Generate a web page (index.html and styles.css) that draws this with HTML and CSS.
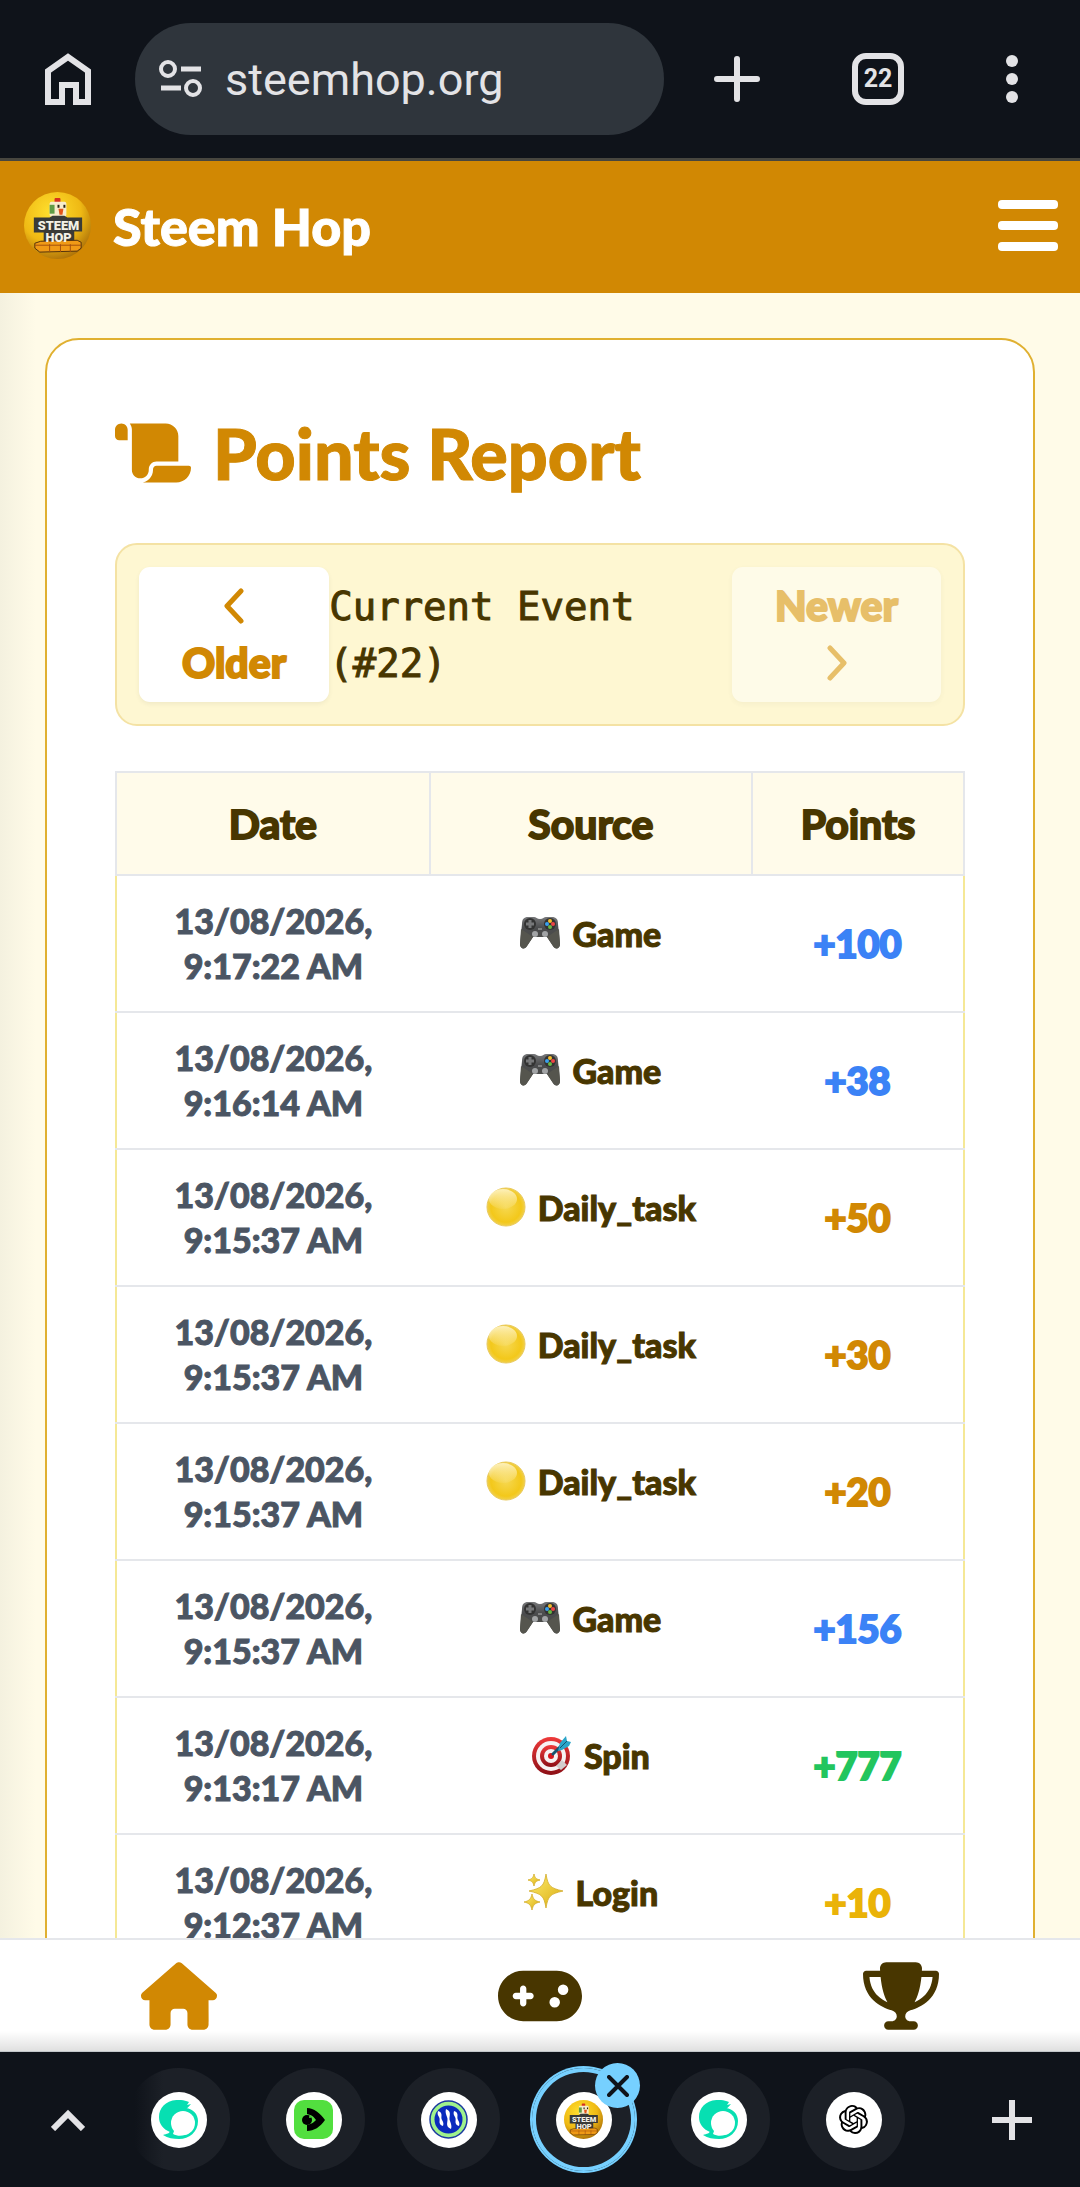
FILE: index.html
```
<!DOCTYPE html>
<html lang="en">
<head>
    <meta charset="UTF-8">
    <meta name="viewport" content="width=device-width, initial-scale=1.0">
    <title>Steem Hop - Points Report</title>
    <link rel="stylesheet" href="styles.css">
</head>
<body>

    <!-- Shared icons -->
    <svg class="sprite" aria-hidden="true">
        <defs>
            <radialGradient id="logoBg" cx="0.4" cy="0.3" r="0.75">
                <stop offset="0" stop-color="#ffe02e"/>
                <stop offset="0.6" stop-color="#efb914"/>
                <stop offset="1" stop-color="#a86c08"/>
            </radialGradient>
            <radialGradient id="ballFill" cx="0.5" cy="0.5" r="0.5">
                <stop offset="0" stop-color="#f6d851"/>
                <stop offset="0.8" stop-color="#f3c81a"/>
                <stop offset="1" stop-color="#f1d04c"/>
            </radialGradient>
            <linearGradient id="ballShine" x1="0" y1="0" x2="0" y2="1">
                <stop offset="0" stop-color="#fdf0b8"/>
                <stop offset="1" stop-color="#fdf0b8" stop-opacity="0.1"/>
            </linearGradient>
            <linearGradient id="padFill" x1="0" y1="0" x2="0" y2="1">
                <stop offset="0" stop-color="#77787a"/>
                <stop offset="0.35" stop-color="#4b4c4e"/>
                <stop offset="1" stop-color="#4a4a45"/>
            </linearGradient>
            <linearGradient id="redFill" x1="0" y1="0" x2="0" y2="1">
                <stop offset="0" stop-color="#ef3a3a"/>
                <stop offset="1" stop-color="#8c0f16"/>
            </linearGradient>
            <linearGradient id="starFill" x1="0" y1="0" x2="1" y2="1">
                <stop offset="0" stop-color="#ffee6e"/>
                <stop offset="1" stop-color="#d9ab10"/>
            </linearGradient>
        </defs>

        <symbol id="logo" viewBox="0 0 68 68">
            <circle cx="34" cy="34" r="34" fill="url(#logoBg)"/>
            <rect x="31" y="6" width="6" height="5" rx="1" fill="#d6301e"/>
            <rect x="26" y="10" width="17" height="15" rx="2" fill="#f7eccb"/>
            <rect x="26" y="13" width="5" height="9" fill="#5f9c45"/>
            <rect x="34" y="13" width="2" height="3" fill="#2a2416"/>
            <rect x="40" y="13" width="2" height="3" fill="#2a2416"/>
            <path d="M35 17h5l-1 6h-3z" fill="#e2551a"/>
            <path d="M10 26h16l3-2h12l3 2h15v14H51v12H20V41H10z" fill="#3a3b37"/>
            <path d="M11 52l6-2 37-1 4 2v6l-4 3-38 1-5-4z" fill="#f09a16" stroke="#53320c"/>
            <path d="M11 54h47M26 53v8M37 53v8M47 53v8" fill="none" stroke="#a4500d"/>
        </symbol>

        <symbol id="gamepad-emoji" viewBox="0 0 40 40">
            <path d="M8 4h6c2 0 3 2 6 2s4-2 6-2h6c4 0 6 2 6 7l2 20c0 5-5 6-7 2l-6-9H13l-6 9c-2 4-7 3-7-2L2 11c0-5 2-7 6-7z" fill="url(#padFill)"/>
            <path d="M1 16l12 8-6 9c-2 4-7 3-7-2zM39 16l-12 8 6 9c2 4 7 3 7-2z" fill="#55554e"/>
            <circle cx="10" cy="11" r="6" fill="#333"/>
            <path d="M10 7v8M6 11h8" stroke="#77787a" stroke-width="3"/>
            <circle cx="30" cy="11" r="6" fill="#333"/>
            <circle cx="30" cy="8" r="2" fill="#f4bd2c"/>
            <circle cx="27" cy="11" r="2" fill="#3aa0ee"/>
            <circle cx="33" cy="11" r="2" fill="#ee4444"/>
            <circle cx="30" cy="14" r="2" fill="#68b844"/>
            <circle cx="15" cy="21" r="3" fill="#a2a4a6"/>
            <circle cx="25" cy="21" r="3" fill="#a2a4a6"/>
            <path d="M18 16h4" stroke="#b5b5b5"/>
        </symbol>

        <symbol id="ball-emoji" viewBox="0 0 40 40">
            <circle cx="20" cy="20" r="19" fill="url(#ballFill)" stroke="#e9c95a"/>
            <ellipse cx="17" cy="12" rx="14" ry="10" fill="url(#ballShine)"/>
        </symbol>

        <symbol id="target-emoji" viewBox="0 0 40 40">
            <circle cx="19" cy="21" r="19" fill="url(#redFill)"/>
            <circle cx="19" cy="21" r="15" fill="#f7f2f2"/>
            <circle cx="19" cy="21" r="11" fill="url(#redFill)"/>
            <circle cx="19" cy="21" r="7" fill="#f7f2f2"/>
            <circle cx="19" cy="21" r="3" fill="#d5161c"/>
            <path d="M24 31l6-6 5 5-6 5z" fill="#d3cccc"/>
            <path d="M21 19L31 9" stroke="#14546f" stroke-width="3" stroke-linecap="round"/>
            <path d="M28 8l6-7 1 5 4 1-2 4-7 4-4 1z" fill="#2ba5c9"/>
            <path d="M28 13L35 6" stroke="#14546f" stroke-width="1"/>
        </symbol>

        <symbol id="sparkles-emoji" viewBox="0 0 40 40">
            <g fill="url(#starFill)" stroke="#d3ac2a" stroke-width="0.8">
                <path d="M22 2c2 12 4 14 17 17-13 3-15 5-17 17-2-12-4-14-17-17 13-3 15-5 17-17z"/>
                <path d="M10 2c1 4 2 5 6 6-4 1-5 2-6 6-1-4-2-5-6-6 4-1 5-2 6-6z"/>
                <path d="M8 22c1 5 3 7 8 8-5 1-7 3-8 8-1-5-3-7-8-8 5-1 7-3 8-8z"/>
            </g>
        </symbol>

        <symbol id="steemit" viewBox="0 0 39 39">
            <path d="M22 0C8 -1 0 7 0 17c0 7 4 12 11 15l5-9 6-13h3c3-1 5-4 7-6l-4 1 2-3c-3-1-5-2-8-2z" fill="#07dfb2"/>
            <path d="M11 31c0 2-3 3-7 4 5 3 10 4 16 4 10 0 19-7 19-18 0-7-5-12-12-13-9 0-14 8-16 23z" fill="#07dfb2"/>
            <circle cx="24" cy="23" r="12" fill="#fff"/>
            <path d="M14 34c5 3 12 2 16-1l-6-4-9 2z" fill="#fff"/>
        </symbol>
    </svg>

    <div class="browser-bar">
        <button class="bar-btn" aria-label="Home">
            <svg width="46" height="52" viewBox="0 0 46 52" fill="none" stroke="#e3e3e6" stroke-width="6"><path d="M3 49V18L23 4l20 14v31H31V32H17v17z"/></svg>
        </button>
        <div class="address">
            <svg width="43" height="38" viewBox="0 0 43 38" fill="none" stroke="#e3e3e6"><circle cx="9" cy="9" r="7" stroke-width="4"/><circle cx="34" cy="28" r="7" stroke-width="4"/><path d="M22 9h20M2 28h20" stroke-width="5"/></svg>
            <input type="text" class="url" value="steemhop.org" aria-label="Address">
        </div>
        <div class="bar-actions">
            <button class="bar-btn" aria-label="New tab">
                <svg width="46" height="46" viewBox="0 0 46 46" stroke="#e3e3e6" stroke-width="6" stroke-linecap="round"><path d="M23 3v40M3 23h40"/></svg>
            </button>
            <button class="tab-count" aria-label="Open tabs">22</button>
            <button class="bar-btn" aria-label="Menu">
                <svg width="12" height="48" viewBox="0 0 12 48" fill="#e3e3e6"><circle cx="6" cy="6" r="6"/><circle cx="6" cy="24" r="6"/><circle cx="6" cy="42" r="6"/></svg>
            </button>
        </div>
    </div>

    <header class="site-header">
        <a class="brand" href="#">
            <svg width="67" height="67" viewBox="0 0 68 68">
                <use href="#logo"/>
                <text x="35" y="39" class="logo-text">STEEM</text>
                <text x="35" y="51" class="logo-text">HOP</text>
            </svg>
            <span>Steem Hop</span>
        </a>
        <button class="bar-btn" aria-label="Open menu">
            <svg width="60" height="52" viewBox="0 0 60 52" fill="#fff"><rect width="60" height="9" rx="4"/><rect y="21" width="60" height="9" rx="4"/><rect y="42" width="60" height="9" rx="4"/></svg>
        </button>
    </header>

    <main class="page">
        <section class="card">
            <h1 class="title">
                <svg width="76" height="60" viewBox="0 32 576 448" fill="currentColor"><path d="M0 80v48c0 17.7 14.3 32 32 32H48 96V80c0-26.5-21.5-48-48-48S0 53.5 0 80zM112 32c10 13.4 16 30 16 48V384c0 35.3 28.7 64 64 64s64-28.7 64-64v-5.3c0-32.4 26.3-58.7 58.7-58.7H480V128c0-53-43-96-96-96H112zM464 480c61.9 0 112-50.1 112-112c0-8.8-7.2-16-16-16H314.7c-14.7 0-26.7 11.9-26.7 26.7V384c0 53-43 96-96 96H368h96z"/></svg>
                Points Report
            </h1>

            <div class="event-nav">
                <button class="event-btn">
                    <span class="chevron"><svg width="22" height="36" viewBox="0 0 22 36" fill="none" stroke="currentColor" stroke-width="5" stroke-linecap="round" stroke-linejoin="round"><path d="M18 3L4 18l14 15"/></svg></span>
                    Older
                </button>
                <span class="event-name">Current Event (#22)</span>
                <button class="event-btn" disabled>
                    Newer
                    <span class="chevron"><svg width="22" height="36" viewBox="0 0 22 36" fill="none" stroke="currentColor" stroke-width="5" stroke-linecap="round" stroke-linejoin="round"><path d="M4 3l14 15L4 33"/></svg></span>
                </button>
            </div>

            <table class="points-table">
                <thead>
                    <tr>
                        <th class="col-date">Date</th>
                        <th class="col-source">Source</th>
                        <th>Points</th>
                    </tr>
                </thead>
                <tbody>
                    <tr>
                        <td class="date">13/08/2026,<br>9:17:22 AM</td>
                        <td class="source"><span><svg><use href="#gamepad-emoji"/></svg>Game</span></td>
                        <td class="points game">+100</td>
                    </tr>
                    <tr>
                        <td class="date">13/08/2026,<br>9:16:14 AM</td>
                        <td class="source"><span><svg><use href="#gamepad-emoji"/></svg>Game</span></td>
                        <td class="points game">+38</td>
                    </tr>
                    <tr>
                        <td class="date">13/08/2026,<br>9:15:37 AM</td>
                        <td class="source"><span><svg><use href="#ball-emoji"/></svg>Daily_task</span></td>
                        <td class="points task">+50</td>
                    </tr>
                    <tr>
                        <td class="date">13/08/2026,<br>9:15:37 AM</td>
                        <td class="source"><span><svg><use href="#ball-emoji"/></svg>Daily_task</span></td>
                        <td class="points task">+30</td>
                    </tr>
                    <tr>
                        <td class="date">13/08/2026,<br>9:15:37 AM</td>
                        <td class="source"><span><svg><use href="#ball-emoji"/></svg>Daily_task</span></td>
                        <td class="points task">+20</td>
                    </tr>
                    <tr>
                        <td class="date">13/08/2026,<br>9:15:37 AM</td>
                        <td class="source"><span><svg><use href="#gamepad-emoji"/></svg>Game</span></td>
                        <td class="points game">+156</td>
                    </tr>
                    <tr>
                        <td class="date">13/08/2026,<br>9:13:17 AM</td>
                        <td class="source"><span><svg><use href="#target-emoji"/></svg>Spin</span></td>
                        <td class="points spin">+777</td>
                    </tr>
                    <tr>
                        <td class="date">13/08/2026,<br>9:12:37 AM</td>
                        <td class="source"><span><svg><use href="#sparkles-emoji"/></svg>Login</span></td>
                        <td class="points login">+10</td>
                    </tr>
                </tbody>
            </table>
        </section>
    </main>

    <nav class="bottom-nav">
        <a href="#" class="active" aria-label="Home">
            <svg width="76" height="68" viewBox="0 0 576 512" fill="currentColor"><path d="M575.8 255.5c0 18-15 32.1-32 32.1l-32 0 .7 160.2c0 2.7-.2 5.4-.5 8.1l0 16.2c0 22.1-17.9 40-40 40l-16 0c-1.1 0-2.2 0-3.3-.1c-1.4 .1-2.8 .1-4.2 .1L416 512l-24 0c-22.1 0-40-17.9-40-40l0-24 0-64c0-17.7-14.3-32-32-32l-64 0c-17.7 0-32 14.3-32 32l0 64 0 24c0 22.1-17.9 40-40 40l-24 0-31.9 0c-1.5 0-3-.1-4.5-.2c-1.2 .1-2.4 .2-3.6 .2l-16 0c-22.1 0-40-17.9-40-40l0-112c0-.9 0-1.9 .1-2.8l0-69.6-32 0c-18 0-32-14-32-32.1c0-9 3-17 10-24L266.4 8c7-7 15-8 22-8s15 2 21 7L564.8 231.5c8 7 12 15 11 24z"/></svg>
        </a>
        <a href="#" aria-label="Games">
            <svg width="84" height="68" viewBox="0 0 640 512" fill="currentColor"><path d="M192 64C86 64 0 150 0 256S86 448 192 448l256 0c106 0 192-86 192-192s-86-192-192-192L192 64zM496 168a40 40 0 1 1 0 80 40 40 0 1 1 0-80zM392 304a40 40 0 1 1 80 0 40 40 0 1 1 -80 0zM168 200c0-13.3 10.7-24 24-24s24 10.7 24 24l0 32 32 0c13.3 0 24 10.7 24 24s-10.7 24-24 24l-32 0 0 32c0 13.3-10.7 24-24 24s-24-10.7-24-24l0-32-32 0c-13.3 0-24-10.7-24-24s10.7-24 24-24l32 0 0-32z"/></svg>
        </a>
        <a href="#" aria-label="Leaderboard">
            <svg width="76" height="68" viewBox="0 0 576 512" fill="currentColor"><path d="M400 0L176 0c-26.5 0-48.1 21.8-47.1 48.2c.2 5.3 .4 10.6 .7 15.8L24 64C10.7 64 0 74.7 0 88c0 92.6 33.5 157 78.5 200.7c44.3 43.1 98.3 64.8 138.1 75.8c23.4 6.5 39.4 26 39.4 45.6c0 20.9-17 37.9-37.9 37.9L192 448c-17.7 0-32 14.3-32 32s14.3 32 32 32l192 0c17.7 0 32-14.3 32-32s-14.3-32-32-32l-26.1 0C337 448 320 431 320 410.1c0-19.6 15.9-39.2 39.4-45.6c39.9-11 93.9-32.7 138.2-75.8C542.5 245 576 180.6 576 88c0-13.3-10.7-24-24-24L446.4 64c.3-5.2 .5-10.4 .7-15.8C448.1 21.8 426.5 0 400 0zM48.9 112l84.4 0c9.1 90.1 29.2 150.3 51.9 190.6c-24.9-11-50.8-26.5-73.2-48.3c-32-31.1-58-76-63-142.3zM464.1 254.3c-22.4 21.8-48.3 37.3-73.2 48.3c22.7-40.3 42.8-100.5 51.9-190.6l84.4 0c-5.1 66.3-31.1 111.2-63 142.3z"/></svg>
        </a>
    </nav>

    <div class="tab-strip">
        <button class="bar-btn" aria-label="Show all tabs">
            <svg width="34" height="22" viewBox="0 0 34 22" fill="none" stroke="#e3e3e6" stroke-width="6"><path d="M2 20L17 5l15 15"/></svg>
        </button>
        <div class="tabs">
            <button class="tab faded" aria-label="Steemit">
                <span class="favicon"><svg width="39" height="39"><use href="#steemit"/></svg></span>
            </button>
            <button class="tab" aria-label="Video">
                <span class="favicon"><svg width="39" height="39" viewBox="0 0 39 39"><rect width="39" height="39" rx="10" fill="#52df3f"/><path d="M13 8c7 0 13 5 18 12-5 7-11 11-18 11v-6c5-1 7-3 9-5-2-3-4-5-9-6z"/><circle cx="13" cy="20" r="5"/><circle cx="16" cy="17" r="1" fill="#52df3f"/></svg></span>
            </button>
            <button class="tab" aria-label="Steem">
                <span class="favicon"><svg width="39" height="39" viewBox="0 0 39 39"><circle cx="19.5" cy="19.5" r="18.5" fill="#9ff28c" stroke="#1b3aa0" stroke-width="1.5"/><circle cx="19.5" cy="19.5" r="14" fill="#0a2bbd"/><path d="M9 11c6 2 2 6 4 9 1 2 2 3 1 6-6-2-2-6-4-9-1-2-2-3-1-6zM17 9c7 3 2 8 4 12 1 3 2 5 1 8-7-3-2-8-4-12-1-3-2-5-1-8zM25 11c6 2 2 6 4 9 1 2 2 3 1 6-6-2-2-6-4-9-1-2-2-3-1-6z" fill="#fff"/></svg></span>
            </button>
            <button class="tab current" aria-label="Steem Hop">
                <span class="favicon">
                    <svg width="39" height="39" viewBox="0 0 68 68">
                        <use href="#logo"/>
                        <text x="35" y="39" class="logo-text">STEEM</text>
                        <text x="35" y="51" class="logo-text">HOP</text>
                    </svg>
                </span>
                <span class="close"><svg width="22" height="22" viewBox="0 0 22 22" stroke="#0f131a" stroke-width="4" stroke-linecap="round"><path d="M2 2l18 18M20 2L2 20"/></svg></span>
            </button>
            <button class="tab" aria-label="Steemit">
                <span class="favicon"><svg width="39" height="39"><use href="#steemit"/></svg></span>
            </button>
            <button class="tab" aria-label="ChatGPT">
                <span class="favicon"><svg width="29" height="29" viewBox="0 0 24 24"><path d="M22.2819 9.8211a5.9847 5.9847 0 0 0-.5157-4.9108 6.0462 6.0462 0 0 0-6.5098-2.9A6.0651 6.0651 0 0 0 4.9807 4.1818a5.9847 5.9847 0 0 0-3.9977 2.9 6.0462 6.0462 0 0 0 .7427 7.0966 5.98 5.98 0 0 0 .511 4.9107 6.051 6.051 0 0 0 6.5146 2.9001A5.9847 5.9847 0 0 0 13.2599 24a6.0557 6.0557 0 0 0 5.7718-4.2058 5.9894 5.9894 0 0 0 3.9977-2.9001 6.0557 6.0557 0 0 0-.7475-7.0729zm-9.022 12.6081a4.4755 4.4755 0 0 1-2.8764-1.0408l.1419-.0804 4.7783-2.7582a.7948.7948 0 0 0 .3927-.6813v-6.7369l2.02 1.1686a.071.071 0 0 1 .038.052v5.5826a4.504 4.504 0 0 1-4.4945 4.4944zm-9.6607-4.1254a4.4708 4.4708 0 0 1-.5346-3.0137l.142.0852 4.783 2.7582a.7712.7712 0 0 0 .7806 0l5.8428-3.3685v2.3324a.0804.0804 0 0 1-.0332.0615L9.74 19.9502a4.4992 4.4992 0 0 1-6.1408-1.6464zM2.3408 7.8956a4.485 4.485 0 0 1 2.3655-1.9728V11.6a.7664.7664 0 0 0 .3879.6765l5.8144 3.3543-2.0201 1.1685a.0757.0757 0 0 1-.071 0l-4.8303-2.7865A4.504 4.504 0 0 1 2.3408 7.872zm16.5963 3.8558L13.1038 8.364 15.1192 7.2a.0757.0757 0 0 1 .071 0l4.8303 2.7913a4.4944 4.4944 0 0 1-.6765 8.1042v-5.6772a.79.79 0 0 0-.407-.667zm2.0107-3.0231l-.142-.0852-4.7735-2.7818a.7759.7759 0 0 0-.7854 0L9.409 9.2297V6.8974a.0662.0662 0 0 1 .0284-.0615l4.8303-2.7866a4.4992 4.4992 0 0 1 6.6802 4.66zM8.3065 12.863l-2.02-1.1638a.0804.0804 0 0 1-.038-.0567V6.0742a4.4992 4.4992 0 0 1 7.3757-3.4537l-.142.0805L8.704 5.459a.7948.7948 0 0 0-.3927.6813zm1.0976-2.3654l2.602-1.4998 2.6069 1.4998v2.9994l-2.5974 1.4997-2.6067-1.4997Z"/></svg></span>
            </button>
        </div>
        <button class="bar-btn" aria-label="New tab">
            <svg width="40" height="40" viewBox="0 0 40 40" stroke="#e3e3e6" stroke-width="6"><path d="M20 0v40M0 20h40"/></svg>
        </button>
    </div>

</body>
</html>
```
FILE: styles.css
```
* {
    box-sizing: border-box;
}

body {
    margin: 0;
    height: 100vh;
    display: flex;
    flex-direction: column;
    overflow: hidden;
    font-family: Lato, sans-serif;
    font-weight: 900;
    color: #483600;
    background: #fffbe8;
}

svg {
    display: block;
    flex-shrink: 0;
}

button {
    font: inherit;
    color: inherit;
    border: none;
    background: none;
    padding: 0;
    cursor: pointer;
}

.sprite {
    position: absolute;
    width: 0;
    height: 0;
}

.logo-text {
    font-family: Roboto, sans-serif;
    font-size: 13px;
    font-weight: 900;
    text-anchor: middle;
    fill: #f3f1e6;
}

/* Browser toolbar */
.browser-bar {
    display: flex;
    align-items: center;
    gap: 44px;
    padding: 23px 62px 23px 45px;
    background: #0f131a;
    border-bottom: 3px solid #47463f;
}

.address {
    flex: 1;
    display: flex;
    align-items: center;
    gap: 23px;
    min-width: 0;
    height: 112px;
    padding: 0 24px;
    border-radius: 56px;
    background: #2f353c;
}

.url {
    flex: 1;
    min-width: 0;
    border: none;
    padding: 0;
    outline: none;
    background: none;
    font-family: Roboto, sans-serif;
    font-size: 45px;
    font-weight: 400;
    color: #e3e3e6;
}

.bar-actions {
    display: flex;
    align-items: center;
    justify-content: space-between;
    width: 304px;
    margin-left: 6px;
}

.tab-count {
    width: 52px;
    height: 52px;
    margin-right: 10px;
    border: 6px solid #e3e3e6;
    border-radius: 14px;
    font-family: Roboto, sans-serif;
    font-size: 25px;
    font-weight: 700;
    line-height: 40px;
    color: #e3e3e6;
}

/* Site header */
.site-header {
    display: flex;
    align-items: center;
    justify-content: space-between;
    height: 132px;
    padding: 0 22px 3px 24px;
    background: #d18803;
}

.brand {
    display: flex;
    align-items: center;
    gap: 22px;
    font-size: 52px;
    line-height: 60px;
    color: #fff;
    text-decoration: none;
}

.brand span,
.title,
.event-name,
.points-table td {
    -webkit-text-stroke: 1px currentColor;
}

.event-btn,
.points-table th,
.points-table .points {
    -webkit-text-stroke: 2px currentColor;
}

/* Report */
.page {
    flex: 1;
    min-height: 0;
    overflow: hidden;
    padding: 45px 45px 0;
    background: linear-gradient(to right, #f4f1df, #fffbe8 36px);
}

.card {
    padding: 68px;
    border: 2px solid #e0b030;
    border-radius: 34px;
    background: #fff;
}

.title {
    display: flex;
    align-items: center;
    gap: 22px;
    margin: 0 0 45px;
    font-size: 70px;
    font-weight: 900;
    line-height: 90px;
    color: #d18803;
}

.event-nav {
    display: flex;
    align-items: center;
    justify-content: space-between;
    margin-bottom: 45px;
    padding: 22px;
    border: 2px solid #f4e2a4;
    border-radius: 22px;
    background: #fef7d2;
}

.event-btn {
    display: flex;
    flex-direction: column;
    align-items: center;
    padding: 10px 43px 11px;
    border-radius: 11px;
    background: #fff;
    box-shadow: 0 2px 5px rgba(0, 0, 0, 0.06);
    font-size: 41px;
    line-height: 57px;
    color: #d18803;
}

.event-btn:disabled {
    opacity: 0.5;
}

.chevron {
    display: flex;
    align-items: center;
    height: 57px;
}

.event-name {
    flex: 1;
    font-family: "DejaVu Sans Mono", monospace;
    font-size: 39px;
    font-weight: 400;
    line-height: 57px;
}

.points-table {
    width: 100%;
    border-collapse: collapse;
    border: 2px solid #f5e896;
    text-align: center;
}

.points-table th {
    padding: 22px 0;
    border: 2px solid #e5e7eb;
    background: #fffbea;
    font-size: 41px;
    line-height: 57px;
}

.col-date {
    width: 37%;
}

.col-source {
    width: 38%;
}

.points-table td {
    padding: 22px 0;
    border-bottom: 2px solid #e5e7eb;
    line-height: 45px;
    vertical-align: middle;
}

.points-table .date {
    font-size: 34px;
    color: #4b5563;
    padding: 22px 0 23px;
}

.points-table .source {
    padding: 22px 0 43px;
    font-size: 34px;
}

.source span {
    display: flex;
    align-items: center;
    justify-content: center;
    gap: 12px;
}

.source svg {
    width: 40px;
    height: 40px;
}

.points {
    font-size: 38px;
}

.game {
    color: #3b82f6;
}

.task {
    color: #d18803;
}

.spin {
    color: #22c55e;
}

.login {
    color: #eab308;
}

/* Bottom navigation */
.bottom-nav {
    display: flex;
    justify-content: space-around;
    padding: 22px 0;
    height: 114px;
    border-top: 2px solid #e5e7eb;
    border-bottom: 1px solid #c3c7cb;
    background: linear-gradient(to top, rgba(0, 0, 0, 0.12), transparent 20px), #fff;
}

.bottom-nav a {
    color: #483600;
}

.bottom-nav .active {
    color: #d18803;
}

/* Tab strip */
.tab-strip {
    display: flex;
    align-items: center;
    justify-content: space-between;
    height: 135px;
    padding: 0 48px 0 51px;
    background: #0f131a;
}

.tabs {
    display: flex;
    align-items: center;
    gap: 32px;
    margin: 0 auto 0 42px;
}

.tab {
    position: relative;
    display: flex;
    align-items: center;
    justify-content: center;
    width: 103px;
    height: 103px;
    border-radius: 50%;
    background: #1c2027;
}

.tab.faded {
    background: linear-gradient(to right, #0f131a 8px, #1c2027 36px);
}

.tab.current {
    box-shadow: inset 0 0 0 4px #76d0ff, 0 0 0 2px #76d0ff;
}

.favicon {
    display: flex;
    align-items: center;
    justify-content: center;
    width: 56px;
    height: 56px;
    border-radius: 50%;
    background: #fff;
}

.close {
    position: absolute;
    top: -5px;
    right: -5px;
    display: flex;
    align-items: center;
    justify-content: center;
    width: 45px;
    height: 45px;
    border-radius: 50%;
    background: #76d0ff;
}
```
